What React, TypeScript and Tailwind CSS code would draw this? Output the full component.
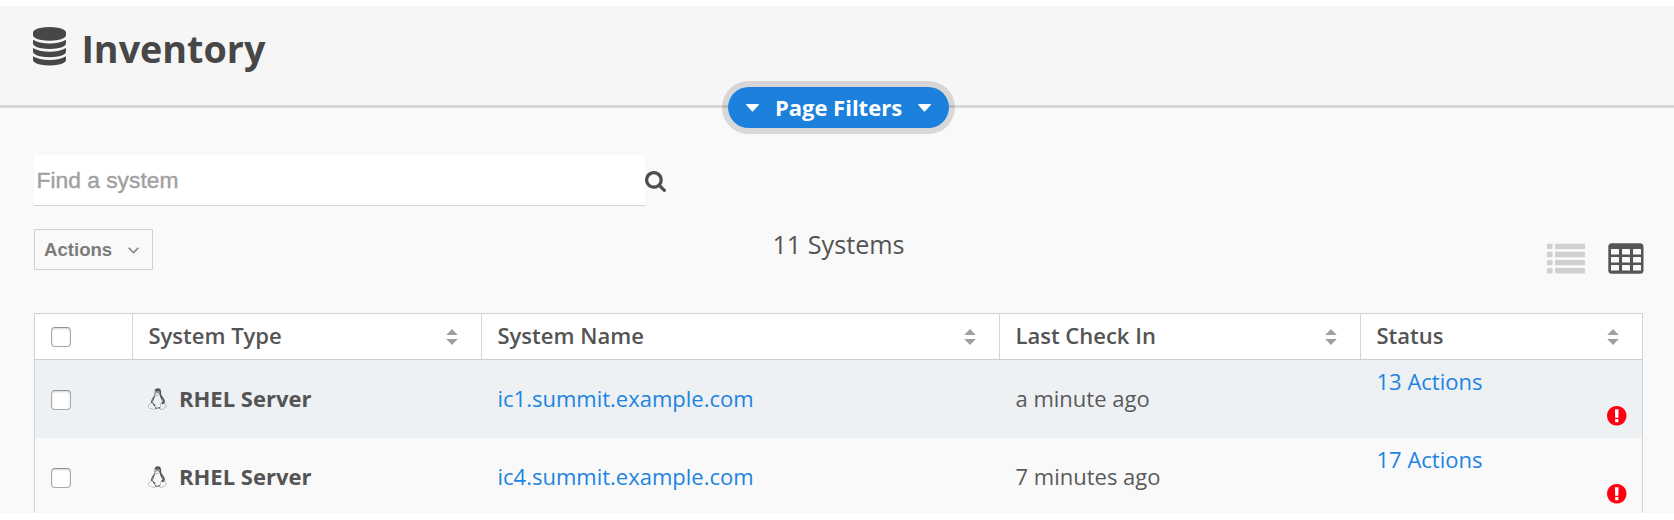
import React from "react";
import { FaLinux } from "react-icons/fa";

const COLS = "grid grid-cols-[97px_349px_518px_361px_1fr]";

const DatabaseIcon = () => (
  <svg viewBox="0 0 1536 1792" className="h-[38.5px] w-[33px] fill-[#474747]">
    <path d="M768 768q237 0 443-43t325-127v170q0 69-103 128t-280 93.5-385 34.5-385-34.5-280-93.5-103-128v-170q119 84 325 127t443 43zm0 768q237 0 443-43t325-127v170q0 69-103 128t-280 93.5-385 34.5-385-34.5-280-93.5-103-128v-170q119 84 325 127t443 43zm0-384q237 0 443-43t325-127v170q0 69-103 128t-280 93.5-385 34.5-385-34.5-280-93.5-103-128v-170q119 84 325 127t443 43zm0-1152q208 0 385 34.5t280 93.5 103 128v128q0 69-103 128t-280 93.5-385 34.5-385-34.5-280-93.5-103-128v-128q0-69 103-128t280-93.5 385-34.5z" />
  </svg>
);

const SearchIcon = () => (
  <svg viewBox="64 128 1664 1664" className="mt-[2px] h-[21px] w-[21px] fill-[#4d4d4d]">
    <path d="M1216 832q0-185-131.5-316.5t-316.5-131.5-316.5 131.5-131.5 316.5 131.5 316.5 316.5 131.5 316.5-131.5 131.5-316.5zm512 832q0 52-38 90t-90 38q-54 0-90-38l-343-342q-179 124-399 124-143 0-273.5-55.5t-225-150-150-225-55.5-273.5 55.5-273.5 150-225 225-150 273.5-55.5 273.5 55.5 225 150 150 225 55.5 273.5q0 220-124 399l343 343q37 37 37 90z" />
  </svg>
);

const AlertIcon = () => (
  <svg viewBox="128 128 1536 1536" className="h-[19.5px] w-[19.5px]">
    <circle cx="896" cy="896" r="700" fill="#fff" />
    <path
      fill="#ff0010"
      d="M896 128q209 0 385.5 103t279.5 279.5 103 385.5-103 385.5-279.5 279.5-385.5 103-385.5-103-279.5-279.5-103-385.5 103-385.5 279.5-279.5 385.5-103zm128 1247v-190q0-14-9-23.5t-22-9.5h-192q-13 0-23 10t-10 23v190q0 13 10 23t23 10h192q13 0 22-9.5t9-23.5zm-2-344l18-621q0-12-10-18-10-8-24-8h-220q-14 0-24 8-10 6-10 18l17 621q0 10 10 17.5t24 7.5h185q14 0 23.5-7.5t10.5-17.5z"
    />
  </svg>
);

const Caret = () => (
  <svg viewBox="0 0 13 8" className="h-[8px] w-[13px] fill-white">
    <path d="M.6 0h11.8q.9.3.3 1L7.1 7.3q-.6.5-1.2 0L.3 1Q-.3.3.6 0z" />
  </svg>
);

const ListIcon = () => (
  <svg viewBox="0 0 38 31" className="h-[31px] w-[38px] fill-[#d0d0d0]">
    {[0.7, 8.8, 16.9, 25].map((y) => (
      <g key={y}>
        <rect x="0" y={y} width="5.5" height="5.4" rx="0.8" />
        <rect x="8" y={y} width="30" height="5.4" rx="0.8" />
      </g>
    ))}
  </svg>
);

const GridIcon = () => (
  <svg viewBox="0 0 36 31" className="h-[31px] w-[36px]">
    <rect x="0.3" y="0.3" width="35.2" height="30.4" rx="3.5" fill="#555" />
    {[6, 14, 22].map((y) =>
      [3, 14, 25].map((x) => (
        <rect key={`${x}-${y}`} x={x} y={y} width="8" height="5.6" rx="0.5" fill="#f9f9f9" />
      ))
    )}
  </svg>
);

const SortIcon = () => (
  <svg viewBox="0 0 12 16" className="h-[16px] w-[12px] fill-[#9f9f9f]">
    <path d="M6 0 11.8 6H.2zM.2 10h11.6L6 16z" />
  </svg>
);

const Checkbox = () => (
  <input
    type="checkbox"
    className="block h-5 w-5 appearance-none rounded-[4px] border border-[#a9a9a9] border-t-[#929292] bg-white shadow-[inset_0_1px_2px_rgba(0,0,0,0.18)]"
  />
);

const headings = ["System Type", "System Name", "Last Check In", "Status"];

const systems = [
  { name: "ic1.summit.example.com", seen: "a minute ago", actions: 13 },
  { name: "ic4.summit.example.com", seen: "7 minutes ago", actions: 17 },
];

export default function App() {
  return (
    <div className="h-[520px] w-[1674px] overflow-hidden bg-white pt-[6px] font-['Open_Sans',sans-serif] text-[#545454]">
      <div className="flex h-[507px] flex-col overflow-hidden bg-[#f9f9f9]">
        <header className="relative h-[102px] shrink-0 border-b-[3px] border-[#d8d8d8] bg-[#f6f6f6]">
          <div className="flex items-start gap-[15px] pl-[33.4px] pt-[21.4px]">
            <DatabaseIcon />
            <h1 className="mt-[-4px] text-[37.7px] font-bold leading-[51px] text-[#474747]">Inventory</h1>
          </div>
          <button className="absolute left-[722px] top-[75px] flex h-[53px] w-[233px] items-center justify-between rounded-full border-[6px] border-black/[0.13] bg-[#1c80dd] bg-clip-padding px-[18px] text-[22px] font-bold text-white">
            <Caret />
            <span className="whitespace-nowrap pb-px">Page Filters</span>
            <Caret />
          </button>
        </header>

        <div className="mt-[47px] flex h-[51px] shrink-0 items-center pl-[34px]">
          <input
            placeholder="Find a system"
            className="h-[51px] w-[611px] border-b border-[#d3d3d3] bg-white pl-[2.5px] pt-px font-['Liberation_Sans',sans-serif] text-[22.8px] text-[#4d4d4d] outline-none placeholder:text-[#a0a0a0] placeholder:opacity-100 placeholder:[-webkit-text-stroke:0.4px_#a0a0a0]"
          />
          <SearchIcon />
        </div>

        <div className="mt-[23px] grid h-[45px] shrink-0 grid-cols-[1fr_auto_1fr] items-start pl-[33px] pr-[30px]">
          <button className="ml-px flex h-[41px] w-[119px] items-center justify-between rounded-[1px] border border-[#cfcfcf] pl-[9px] pr-[13px] pt-px font-['Liberation_Sans',sans-serif] text-[18.6px] font-bold text-[#7b7c7d]">
            Actions
            <svg viewBox="0 0 11 7" className="h-[7px] w-[11px] fill-none stroke-[#7b7c7d] stroke-[1.5]">
              <path d="M.7.7 5.5 5.7 10.3.7" />
            </svg>
          </button>
          <span className="mt-[-2px] whitespace-nowrap text-[25.2px] leading-[34px]">11 Systems</span>
          <div className="mt-[14px] flex gap-[23px] justify-self-end">
            <ListIcon />
            <GridIcon />
          </div>
        </div>

        <div className="ml-[34px] mt-[39px] w-[1609px] shrink-0 border border-[#d3d3d3] text-[22px]">
          <div className={`${COLS} h-[46px] border-b border-[#cfcfcf] bg-white font-semibold`}>
            <div className="flex items-center pl-4">
              <Checkbox />
            </div>
            {headings.map((h) => (
              <div key={h} className="flex items-center justify-between border-l border-[#d6d6d6] pl-[15.5px] pr-[23px]">
                <span className="mt-[-2px]">{h}</span>
                <SortIcon />
              </div>
            ))}
          </div>
          {systems.map((s) => (
            <div key={s.name} className={`${COLS} h-[78px] odd:bg-[#f9f9f9] even:bg-[#edf1f4]`}>
              <div className="flex items-center pl-4 pt-[2px]">
                <Checkbox />
              </div>
              <div className="flex items-center gap-3 pl-[16px] font-bold">
                <FaLinux className="h-[22px] w-[19px]" />
                <span className="pb-px">RHEL Server</span>
              </div>
              <a className="flex items-center pb-px pl-[16.5px] text-[#1c84e0]">{s.name}</a>
              <div className="flex items-center pb-px pl-[16.5px] text-[#5a5a5a]">{s.seen}</div>
              <div className="flex flex-col pl-[16.5px] pr-[15.500px] pt-[4.500px]">
                <a className="leading-[32px] text-[#1c84e0]">{s.actions} Actions</a>
                <span className="mt-[9.5px] self-end">
                  <AlertIcon />
                </span>
              </div>
            </div>
          ))}
        </div>
      </div>
    </div>
  );
}
